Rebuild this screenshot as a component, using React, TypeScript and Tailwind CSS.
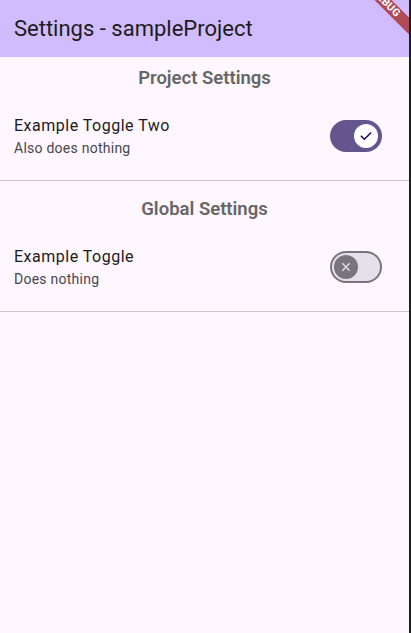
import React from "react";

interface ToggleTileProps {
  title: string;
  subtitle: string;
  on: boolean;
}

const Toggle: React.FC<{ on: boolean }> = ({ on }) => {
  if (on) {
    return (
      <div className="w-[52px] h-[32px] rounded-full bg-[#65558F] flex items-center justify-end pr-[4px]">
        <div className="w-[24px] h-[24px] rounded-full bg-white flex items-center justify-center">
          <svg width="16" height="16" viewBox="0 0 24 24" fill="none">
            <path
              d="M5 12.5l4.5 4.5L19 7.5"
              stroke="#21005D"
              strokeWidth="2.2"
              strokeLinecap="square"
            />
          </svg>
        </div>
      </div>
    );
  }
  return (
    <div className="w-[52px] h-[32px] rounded-full bg-[#E6E0E9] border-2 border-[#79747E] flex items-center pl-[2px]">
      <div className="w-[24px] h-[24px] rounded-full bg-[#79747E] flex items-center justify-center">
        <svg width="16" height="16" viewBox="0 0 24 24" fill="none">
          <path
            d="M6.5 6.5l11 11M17.5 6.5l-11 11"
            stroke="#E6E0E9"
            strokeWidth="2"
          />
        </svg>
      </div>
    </div>
  );
};

const ToggleTile: React.FC<ToggleTileProps> = ({ title, subtitle, on }) => {
  return (
    <div className="h-[72px] flex items-center pl-[14px] pr-[27px]">
      <div className="flex-1 flex flex-col">
        <span className="text-[16px] leading-[24px] tracking-[0.5px] text-[#1D1B20]">
          {title}
        </span>
        <span className="text-[14px] leading-[20px] tracking-[0.25px] text-[#49454F]">
          {subtitle}
        </span>
      </div>
      <Toggle on={on} />
    </div>
  );
};

const Section: React.FC<{ heading: string; children: React.ReactNode }> = ({
  heading,
  children,
}) => (
  <div>
    <div className="h-[43px] flex items-center justify-center">
      <span className="text-[18.5px] font-semibold text-[#666666]">{heading}</span>
    </div>
    {children}
    <div className="h-[16px] flex items-center">
      <div className="w-full h-px bg-[#CAC4D0]" />
    </div>
  </div>
);

export default function App() {
  return (
    <div
      className="w-[411px] h-[633px] flex bg-[#FEF7FF] overflow-hidden"
      style={{ fontFamily: "Roboto, 'Noto Sans', sans-serif" }}
    >
      <div className="w-[409px] flex flex-col relative overflow-hidden">
        <div className="h-[57px] bg-[#D0BCFF] flex items-center pl-[14px]">
          <h1 className="text-[22px] text-[#1D1B20] font-normal">
            Settings - sampleProject
          </h1>
        </div>
        <Section heading="Project Settings">
          <ToggleTile title="Example Toggle Two" subtitle="Also does nothing" on />
        </Section>
        <Section heading="Global Settings">
          <ToggleTile title="Example Toggle" subtitle="Does nothing" on={false} />
        </Section>
        <div className="absolute left-[326px] top-[-3px] w-[120px] h-[12px] bg-[#B04A55] rotate-45 flex items-center justify-center">
          <span className="text-[10.5px] leading-[12px] font-bold text-white tracking-[0.3px]">
            DEBUG
          </span>
        </div>
      </div>
      <div className="w-[2px] bg-[#1E1E1E]" />
    </div>
  );
}
